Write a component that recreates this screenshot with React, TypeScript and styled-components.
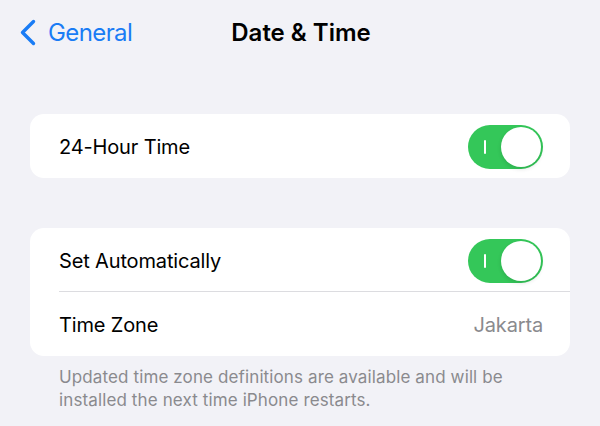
import React from 'react'
import styled, { createGlobalStyle } from 'styled-components'

const GlobalStyle = createGlobalStyle`
  *, *::before, *::after {
    box-sizing: border-box;
  }
  html, body {
    margin: 0;
    padding: 0;
    background: #f2f2f7;
    font-family: Inter, "Noto Sans", "Liberation Sans", sans-serif;
    -webkit-font-smoothing: antialiased;
  }
`

const Page = styled.div`
  width: 600px;
  min-height: 426px;
  background: #f2f2f7;
  display: flex;
  flex-direction: column;
`

const NavBar = styled.div`
  height: 64px;
  display: grid;
  grid-template-columns: 1fr auto 1fr;
  align-items: center;
  padding: 0 19px;
`

const BackButton = styled.div`
  display: flex;
  align-items: center;
  gap: 12px;
  color: #1a7cf5;
  font-size: 24px;
  letter-spacing: -0.6px;
`

const Title = styled.div`
  font-size: 24px;
  font-weight: 600;
  color: #000;
  transform: translateX(1px);
`

const Content = styled.div`
  display: flex;
  flex-direction: column;
  padding: 50px 30px 0;
  gap: 50px;
`

const Group = styled.div``

const Card = styled.div`
  background: #fff;
  border-radius: 14px;
  overflow: hidden;
`

const Row = styled.div<{ divider?: boolean }>`
  height: 64px;
  display: flex;
  align-items: center;
  justify-content: space-between;
  padding: 1px 27px 0 29px;
  position: relative;
  font-size: 20px;
  letter-spacing: -0.15px;
  color: #000;

  ${({ divider }) =>
    divider &&
    `
    &::after {
      content: '';
      position: absolute;
      left: 29px;
      right: 0;
      bottom: 0;
      height: 1px;
      background: #dcdce0;
    }
  `}
`

const Value = styled.span`
  color: #8a8a8e;
`

const Footnote = styled.p`
  margin: 0;
  padding: 10px 29px 0;
  font-size: 17px;
  line-height: 23px;
  letter-spacing: 0.12px;
  color: #8a8a8e;
`

const Track = styled.div<{ on: boolean }>`
  width: 75px;
  height: 44px;
  border-radius: 22px;
  background: ${({ on }) => (on ? '#34c759' : '#e9e9eb')};
  position: relative;
  flex-shrink: 0;
`

const OnMark = styled.span`
  position: absolute;
  left: 16px;
  top: 15px;
  width: 2px;
  height: 14px;
  border-radius: 1px;
  background: #fff;
`

const Knob = styled.span<{ on: boolean }>`
  position: absolute;
  top: 2px;
  left: ${({ on }) => (on ? '33px' : '2px')};
  width: 40px;
  height: 40px;
  border-radius: 50%;
  background: #fff;
  box-shadow: 0 2px 4px rgba(0, 0, 0, 0.12);
`

function Toggle({ on }: { on: boolean }) {
  return (
    <Track on={on}>
      {on && <OnMark />}
      <Knob on={on} />
    </Track>
  )
}

function Chevron() {
  return (
    <svg width="17" height="27" viewBox="0 0 17 27" fill="none">
      <path
        d="M14.5 2.5L3.5 13.5L14.5 24.5"
        stroke="#1a7cf5"
        strokeWidth="3.4"
        strokeLinecap="round"
        strokeLinejoin="round"
      />
    </svg>
  )
}

export default function App() {
  return (
    <Page>
      <GlobalStyle />
      <NavBar>
        <BackButton>
          <Chevron />
          General
        </BackButton>
        <Title>Date &amp; Time</Title>
        <div />
      </NavBar>
      <Content>
        <Card>
          <Row>
            24-Hour Time
            <Toggle on />
          </Row>
        </Card>
        <Group>
          <Card>
            <Row divider>
              Set Automatically
              <Toggle on />
            </Row>
            <Row>
              Time Zone
              <Value>Jakarta</Value>
            </Row>
          </Card>
          <Footnote>
            Updated time zone definitions are available and will be installed the next time iPhone
            restarts.
          </Footnote>
        </Group>
      </Content>
    </Page>
  )
}
